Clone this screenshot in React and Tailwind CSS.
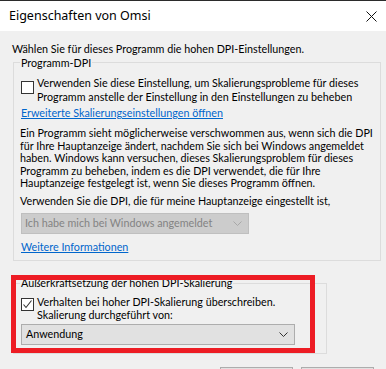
import React from "react";

const Chevron = ({ color }) => (
  <svg width="9" height="5" viewBox="0 0 9 5" className="shrink-0">
    <polyline points="0.5,0.5 4.5,4.5 8.5,0.5" fill="none" stroke={color} strokeWidth="1" />
  </svg>
);

const Checkbox = ({ checked, className }) => (
  <div className={`h-[13px] w-[13px] shrink-0 border border-[#333333] bg-white ${className}`}>
    {checked && (
      <svg width="11" height="11" viewBox="0 0 11 11">
        <polyline points="1.5,5.5 4,8.5 9.5,1.5" fill="none" stroke="#333333" strokeWidth="1.1" />
      </svg>
    )}
  </div>
);

export default function App() {
  return (
    <div
      className="relative h-[369px] w-[386px] overflow-hidden whitespace-nowrap bg-[#f0f0f0] text-[10.75px] text-black"
      style={{ fontFamily: 'Lato, "Noto Sans", sans-serif' }}
    >
      {/* title bar */}
      <div
        className="flex h-[31px] items-center justify-between border-t border-[#2b2b2b] bg-white pl-[9px] pr-[9px]"
        style={{ fontFamily: '"Noto Sans", sans-serif' }}
      >
        <span className="text-[12.5px] leading-none">Eigenschaften von Omsi</span>
        <svg width="11" height="11" viewBox="0 0 11 11">
          <path d="M0.5 0.5 L10.5 10.5 M10.5 0.5 L0.5 10.5" stroke="#111" strokeWidth="1" />
        </svg>
      </div>

      <div className="pl-[12px] pt-[11px] leading-[13px]">Wählen Sie für dieses Programm die hohen DPI-Einstellungen.</div>

      {/* Programm-DPI */}
      <div className="relative ml-[13px] mr-[5px] mt-[7px] h-[199px] border border-[#dcdcdc] pl-[7px] pr-[2px]">
        <span className="absolute left-[6px] top-[-7px] bg-[#f0f0f0] px-[1px] leading-[13px]">Programm-DPI</span>

        <div className="mt-[13px] flex items-start">
          <Checkbox className="mt-[5px]" />
          <p className="ml-[3px] leading-[13.5px]">
            Verwenden Sie diese Einstellung, um Skalierungsprobleme für dieses
            <br />
            Programm anstelle der Einstellung in den Einstellungen zu beheben
          </p>
        </div>

        <div className="mt-[3px] leading-[13px] text-[#0066cc] underline">Erweiterte Skalierungseinstellungen öffnen</div>

        <p className="-ml-[1px] mt-[8px] leading-[12.5px]">
          Ein Programm sieht möglicherweise verschwommen aus, wenn sich die DPI
          <br />
          für Ihre Hauptanzeige ändert, nachdem Sie sich bei Windows angemeldet
          <br />
          haben. Windows kann versuchen, dieses Skalierungsproblem für dieses
          <br />
          Programm zu beheben, indem es die DPI verwendet, die für Ihre
          <br />
          Hauptanzeige festgelegt ist, wenn Sie dieses Programm öffnen.
        </p>

        <p className="-ml-[1px] mt-[4px] leading-[13px]">Verwenden Sie die DPI, die für meine Hauptanzeige eingestellt ist,</p>

        <div className="mt-[6px] flex h-[21px] w-[228px] items-center justify-between border border-[#bfbfbf] bg-[#cccccc] pl-[3px] pr-[6px] text-[#838383]">
          <span>Ich habe mich bei Windows angemeldet</span>
          <Chevron color="#a8a8a8" />
        </div>

        <div className="mt-[6px] leading-[13px] text-[#0066cc] underline">Weitere Informationen</div>
      </div>

      {/* Außerkraftsetzung */}
      <div className="relative ml-[13px] mt-[22px] h-[71px] w-[314px] border border-[#dcdcdc] pl-[7px]">
        <span className="absolute left-[6px] top-[-8px] bg-[#f0f0f0] px-[1px] leading-[13px]">Außerkraftsetzung der hohen DPI-Skalierung</span>

        <div className="mt-[12px] flex items-start">
          <Checkbox checked className="mt-[2px]" />
          <p className="ml-[3px] leading-[12.5px]">
            Verhalten bei hoher DPI-Skalierung überschreiben.
            <br />
            Skalierung durchgeführt von:
          </p>
        </div>

        <div className="mt-[3px] flex h-[21px] w-[274px] items-center justify-between border border-[#adadad] bg-[#e1e1e1] pl-[4px] pr-[6px]">
          <span>Anwendung</span>
          <Chevron color="#333333" />
        </div>
      </div>

      {/* buttons peeking at the bottom */}
      <div className="mt-[13px] flex gap-[8px] pl-[220px]">
        <div className="h-[24px] w-[73px] border border-[#adadad] bg-[#e1e1e1]" />
        <div className="h-[24px] w-[73px] border border-[#adadad] bg-[#e1e1e1]" />
      </div>

      {/* red annotation frame */}
      <div className="absolute left-[11px] top-[275px] h-[78px] w-[304px] border-[5px] border-[#ed1c24]" />
    </div>
  );
}
